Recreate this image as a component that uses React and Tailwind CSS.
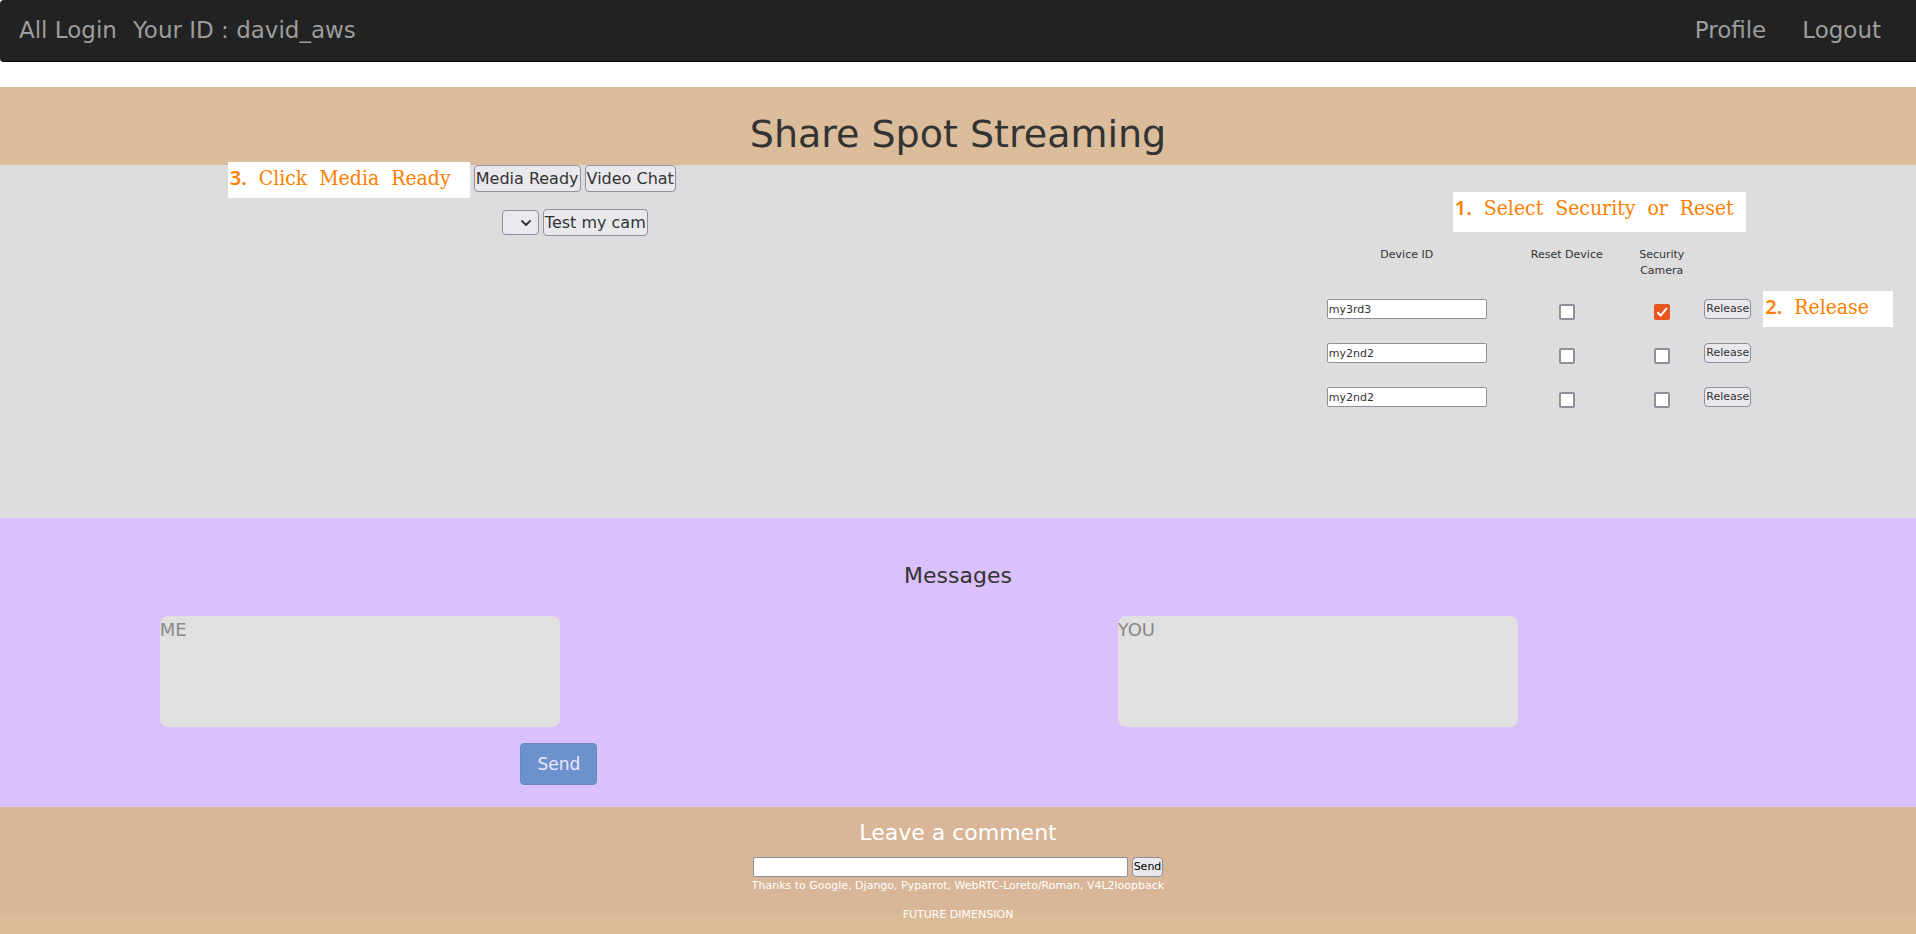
const DEVICES = [
  { id: 1, name: "my3rd3", reset: false, security: true, note: "2.", noteText: "Release" },
  { id: 2, name: "my2nd2", reset: false, security: false },
  { id: 3, name: "my2nd2", reset: false, security: false },
];

const SMALL_BUTTON =
  "h-5 rounded border border-[#8f8f9d] bg-[#e9e9ed] px-px text-[11px] leading-[18px]";
const BUTTON =
  "h-[27px] rounded border border-[#8f8f9d] bg-[#e9e9ed] px-px text-base leading-[25px]";

function Note({ number, children, className }) {
  return (
    <div
      className={
        "absolute bg-white pl-0.5 text-left font-['DejaVu_Serif_Condensed','DejaVu_Serif',serif] text-[21px] leading-8 whitespace-pre text-[#ff8000] " +
        className
      }
    >
      <span className="font-['Noto_Sans',sans-serif] text-xl font-semibold">{number}</span>
      {"  " + children}
    </div>
  );
}

function Checkbox({ label, checked }) {
  return (
    <span className="relative mt-2.5 inline-block h-4 w-4">
      <input
        type="checkbox"
        aria-label={label}
        defaultChecked={checked}
        className="peer block h-4 w-4 appearance-none rounded-xs border-2 border-[#8f8f9d] bg-white checked:border-[#e95420] checked:bg-[#e95420]"
      />
      <svg
        viewBox="0 0 16 16"
        className="pointer-events-none absolute inset-0 hidden h-4 w-4 peer-checked:block"
        fill="none"
        stroke="white"
        strokeWidth="2"
        strokeLinecap="round"
        strokeLinejoin="round"
      >
        <path d="M4 8.8 6.6 11.6 12.4 4.6" />
      </svg>
    </span>
  );
}

function DeviceTable() {
  return (
    <div className="relative mt-[82px]">
      <Note number="1." className="bottom-full left-[136px] mb-[15px] h-10 w-[293px]">
        {"Select  Security  or  Reset"}
      </Note>
      <table className="table-fixed text-center text-[11px] leading-4">
        <colgroup>
          <col className="w-[180px]" />
          <col className="w-[140px]" />
          <col className="w-[50px]" />
          <col className="w-[82px]" />
        </colgroup>
        <thead>
          <tr className="h-10 align-top">
            <th className="font-normal">Device ID</th>
            <th className="font-normal">Reset Device</th>
            <th className="font-normal">Security Camera</th>
            <td />
          </tr>
        </thead>
        <tbody>
          {DEVICES.map((device) => (
            <tr key={device.id} className="h-11">
              <td>
                <input
                  type="text"
                  aria-label="Device ID"
                  defaultValue={device.name}
                  className="h-5 w-40 rounded-xs border border-[#8f8f9d] bg-white px-px"
                />
              </td>
              <td>
                <Checkbox label="Reset Device" checked={device.reset} />
              </td>
              <td>
                <Checkbox label="Security Camera" checked={device.security} />
              </td>
              <td>
                <span className="relative inline-block">
                  <button type="button" className={SMALL_BUTTON}>
                    Release
                  </button>
                  {device.note && (
                    <Note number={device.note} className="-top-2 left-full ml-3 h-9 w-[130px]">
                      {device.noteText}
                    </Note>
                  )}
                </span>
              </td>
            </tr>
          ))}
        </tbody>
      </table>
    </div>
  );
}

function MessageBox({ label }) {
  return (
    <textarea
      aria-label={label}
      placeholder={label}
      className="block h-[111px] w-[400px] resize-none rounded-lg bg-[#e0e0e0] text-lg leading-7 placeholder:text-[#888]"
    />
  );
}

export default function App() {
  return (
    <div className="min-h-screen bg-[#dbbc98] font-['DejaVu_Sans',Verdana,sans-serif] text-[#333]">
      <div className="bg-white pb-[25px]">
        <nav className="flex h-[62px] items-center justify-between rounded-l border-b border-[#080808] bg-[#222] px-[19px] pb-0.5 text-[23px] leading-8 text-[#9d9d9d]">
          <div className="flex gap-4">
            <a href="#login">All Login</a>
            <a href="#id">Your ID : david_aws</a>
          </div>
          <div className="flex gap-9 pr-4">
            <a href="#profile">Profile</a>
            <a href="#logout">Logout</a>
          </div>
        </nav>
      </div>

      <header className="bg-[#dbbd9b] pt-6 pb-2">
        <h1 className="text-center text-[38px] leading-[46px]">Share Spot Streaming</h1>
      </header>

      <main>
        <section className="flex min-h-[353px] bg-[#ddd]">
          <div className="flex w-3/5 flex-col items-center gap-[17px]">
            <div className="relative flex gap-1">
              <Note number="3." className="-top-[3px] right-full mr-1 h-9 w-[242px]">
                {"Click  Media  Ready"}
              </Note>
              <button type="button" className={BUTTON}>
                Media Ready
              </button>
              <button type="button" className={BUTTON}>
                Video Chat
              </button>
            </div>
            <div className="flex items-center gap-1">
              <span className="relative">
                <select
                  aria-label="Camera"
                  className="block h-[25px] w-[37px] appearance-none rounded border border-[#8f8f9d] bg-[#e9e9ed]"
                />
                <svg
                  viewBox="0 0 10 6"
                  className="pointer-events-none absolute top-[10px] right-2 h-1.5 w-2.5"
                  fill="none"
                  stroke="#333"
                  strokeWidth="1.8"
                  strokeLinecap="round"
                  strokeLinejoin="round"
                >
                  <path d="M1 1 5 5 9 1" />
                </svg>
              </span>
              <button type="button" className={BUTTON}>
                Test my cam
              </button>
            </div>
          </div>
          <div className="flex w-2/5 items-start justify-center pl-5">
            <DeviceTable />
          </div>
        </section>

        <section className="bg-[#dac1fb] pt-[42px] pb-[22px]">
          <h2 className="text-center text-[22px] leading-8">Messages</h2>
          <div className="mt-6 grid grid-cols-2">
            <div className="pl-[16.67%]">
              <MessageBox label="ME" />
            </div>
            <div className="pl-[16.67%]">
              <MessageBox label="YOU" />
            </div>
          </div>
          <div className="mt-4 flex w-1/2 justify-center pl-[8.33%]">
            <button
              type="button"
              className="h-[42px] rounded border border-[#6889c4] bg-[#6c92ce] px-4 text-[17px] leading-6 text-[#efe6fe]"
            >
              Send
            </button>
          </div>
        </section>
      </main>

      <footer className="flex h-[107px] flex-col items-center bg-[#d8b697] pt-2.5 text-[11px] leading-4 text-white">
        <h2 className="text-[22px] leading-8">Leave a comment</h2>
        <form className="mt-2 flex gap-1 text-black" onSubmit={(event) => event.preventDefault()}>
          <input
            type="text"
            aria-label="Leave a comment"
            className="h-5 w-[375px] rounded-xs border border-[#8f8f9d] bg-white px-px"
          />
          <button type="submit" className={SMALL_BUTTON}>
            Send
          </button>
        </form>
        <p className="mt-px">Thanks to Google, Django, Pyparrot, WebRTC-Loreto/Roman, V4L2loopback</p>
        <p className="mt-[13px]">FUTURE DIMENSION</p>
      </footer>
    </div>
  );
}
